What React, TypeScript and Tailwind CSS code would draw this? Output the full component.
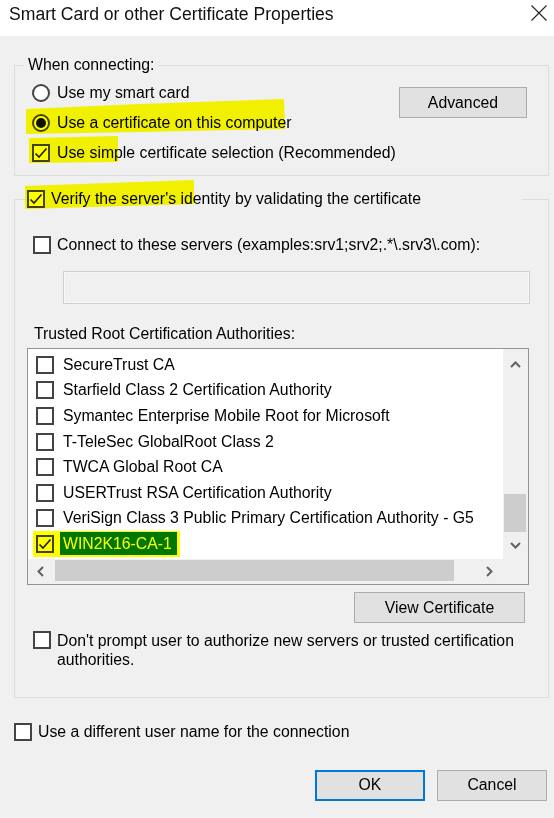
import React from "react";

function CheckBox({ checked = false }: { checked?: boolean }) {
  return (
    <span className="flex h-[18px] w-[18px] shrink-0 items-center justify-center border-2 border-[#444] bg-white">
      {checked && (
        <svg width="14" height="14" viewBox="0 0 14 14">
          <path d="M1.5 7.5 L5 11 L12.5 2.5" fill="none" stroke="#222" strokeWidth="1.7" />
        </svg>
      )}
    </span>
  );
}

function Radio({ on = false }: { on?: boolean }) {
  return (
    <span className="flex h-[18px] w-[18px] shrink-0 items-center justify-center rounded-full border-2 border-[#444] bg-white">
      {on && <span className="h-[10px] w-[10px] rounded-full bg-[#111]" />}
    </span>
  );
}

function Chevron({ dir }: { dir: "up" | "down" | "left" | "right" }) {
  const d =
    dir === "up"
      ? "M1 7 L5.5 2.5 L10 7"
      : dir === "down"
      ? "M1 3 L5.5 7.5 L10 3"
      : dir === "left"
      ? "M7 1 L2.5 5.5 L7 10"
      : "M3 1 L7.5 5.5 L3 10";
  return (
    <svg width="11" height="11" viewBox="0 0 11 11">
      <path d={d} fill="none" stroke="#606060" strokeWidth="2" />
    </svg>
  );
}

const authorities = [
  "SecureTrust CA",
  "Starfield Class 2 Certification Authority",
  "Symantec Enterprise Mobile Root for Microsoft",
  "T-TeleSec GlobalRoot Class 2",
  "TWCA Global Root CA",
  "USERTrust RSA Certification Authority",
  "VeriSign Class 3 Public Primary Certification Authority - G5",
];

export default function App() {
  return (
    <div className="relative h-[818px] w-[554px] overflow-hidden bg-[#f0f0f0] font-['Liberation_Sans',Arial,sans-serif] text-[15.8px] leading-[18px] text-black">
      {/* title bar */}
      <div className="flex h-[36px] items-start justify-between bg-white pl-[9px] pr-[7px]">
        <span className="mt-[4px] text-[17.6px] leading-[20px] text-[#111]">
          Smart Card or other Certificate Properties
        </span>
        <svg className="mt-[5px]" width="16" height="16" viewBox="0 0 16 16">
          <path d="M0.5 0.5 L15.5 15.5 M15.5 0.5 L0.5 15.5" stroke="#222" strokeWidth="1.1" />
        </svg>
      </div>

      {/* connection method group */}
      <fieldset className="ml-[14px] mt-[20px] w-[535px] border border-[#dcdcdc] pb-[7px] pt-[4px]">
        <legend className="ml-[9px] px-[4px] leading-[18px]">When connecting:</legend>
        <div className="flex items-start justify-between">
          <div className="flex flex-col pl-[17px]">
            <label className="flex h-[30px] items-center gap-[7px]">
              <Radio />
              <span>Use my smart card</span>
            </label>
            <label className="flex h-[30px] items-center gap-[7px]">
              <Radio on />
              <span>Use a certificate on this computer</span>
            </label>
            <label className="flex h-[30px] items-center gap-[7px]">
              <CheckBox checked />
              <span>Use simple certificate selection (Recommended)</span>
            </label>
          </div>
          <button className="mr-[21px] mt-[9px] h-[31px] w-[128px] border border-[#adadad] bg-[#e1e1e1] text-black">
            Advanced
          </button>
        </div>
      </fieldset>

      {/* server validation group */}
      <fieldset className="ml-[14px] mt-[14px] w-[535px] border border-[#dcdcdc] pb-[28px]">
        <legend className="ml-[10px] w-[497px] pl-[2px]">
          <span className="flex h-[18px] items-center gap-[6px]">
            <CheckBox checked />
            <span>Verify the server's identity by validating the certificate</span>
          </span>
        </legend>
        <div className="flex flex-col">
          <label className="ml-[18px] mt-[27px] flex h-[20px] items-center gap-[6px]">
            <CheckBox />
            <span>Connect to these servers (examples:srv1;srv2;.*\.srv3\.com):</span>
          </label>
          <div className="ml-[48px] mt-[16px] h-[33px] w-[467px] border border-[#cfcfcf] bg-[#f0f0f0] shadow-[inset_0_0_0_1px_#f7f7f7]" />
          <div className="ml-[19px] mt-[21px]">Trusted Root Certification Authorities:</div>

          {/* certificate authority list */}
          <div className="ml-[12px] mt-[5px] grid h-[237px] w-[502px] grid-cols-[1fr_25px] grid-rows-[1fr_25px] border border-[#8f949c] bg-white">
            <div className="flex flex-col overflow-hidden pt-[3px]">
              {authorities.map((name) => (
                <div key={name} className="flex h-[25.6px] shrink-0 items-center pl-[8px]">
                  <CheckBox />
                  <span className="ml-[6px] whitespace-nowrap px-[3px]">{name}</span>
                </div>
              ))}
              <div className="flex h-[25.6px] shrink-0 items-center pl-[8px]">
                <CheckBox checked />
                <span className="ml-[6px] whitespace-nowrap bg-[#0078d7] px-[3px] pr-[5px] leading-[23px] text-white">
                  WIN2K16-CA-1
                </span>
              </div>
            </div>
            <div className="flex flex-col bg-[#f0f0f0]">
              <div className="flex h-[32px] items-center justify-center">
                <Chevron dir="up" />
              </div>
              <div className="flex-1" />
              <div className="ml-[1px] h-[38px] w-[22px] bg-[#cdcdcd]" />
              <div className="flex h-[27px] items-center justify-center">
                <Chevron dir="down" />
              </div>
            </div>
            <div className="flex items-start bg-[#f0f0f0]">
              <div className="flex h-[24px] w-[27px] items-center justify-center">
                <Chevron dir="left" />
              </div>
              <div className="mt-[1px] h-[21px] w-[399px] bg-[#cdcdcd]" />
              <div className="flex-1" />
              <div className="flex h-[24px] w-[28px] items-center justify-center">
                <Chevron dir="right" />
              </div>
            </div>
            <div className="bg-[#f0f0f0]" />
          </div>

          <button className="mr-[23px] mt-[7px] h-[31px] w-[171px] self-end border border-[#adadad] bg-[#e1e1e1] text-black">
            View Certificate
          </button>

          <label className="ml-[18px] mt-[8px] flex items-start gap-[6px]">
            <CheckBox />
            <span className="-mt-[0.5px] w-[470px] leading-[19px]">
              Don't prompt user to authorize new servers or trusted certification authorities.
            </span>
          </label>
        </div>
      </fieldset>

      <label className="ml-[14px] mt-[25px] flex h-[18px] items-center gap-[6px]">
        <CheckBox />
        <span>Use a different user name for the connection</span>
      </label>

      <div className="mt-[29px] flex justify-end gap-[12px] pr-[7px]">
        <button className="h-[31px] w-[110px] border-2 border-[#0078d7] bg-[#e1e1e1] text-black">OK</button>
        <button className="h-[31px] w-[110px] border border-[#adadad] bg-[#e1e1e1] text-black">Cancel</button>
      </div>

      {/* highlighter marks */}
      <svg
        className="pointer-events-none absolute left-0 top-0 mix-blend-multiply"
        width="554"
        height="818"
        viewBox="0 0 554 818"
      >
        <g fill="#ffff00">
          <polygon points="26,109 140,104 284,99 285,129 140,132 26,134" />
          <polygon points="29,138 118,136 118,162 29,163" />
          <polygon points="25,186 194,180 194,204 25,209" />
          <polygon points="33,531 180,531 180,557 33,557" />
        </g>
      </svg>
    </div>
  );
}
